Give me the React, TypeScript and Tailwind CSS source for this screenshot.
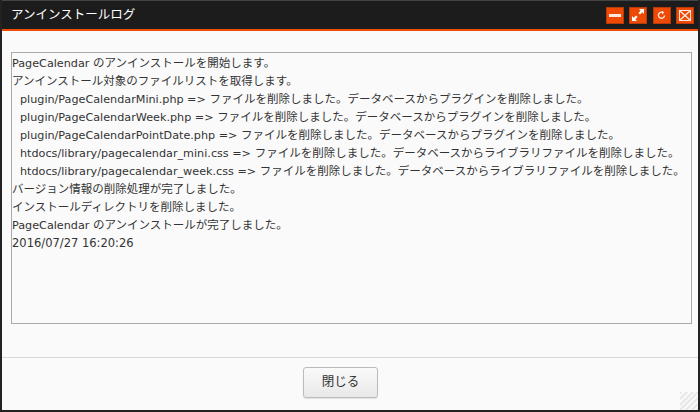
import React from 'react';

const logLines = [
  { latin: 'PageCalendar', text: ' のアンインストールを開始します。' },
  { text: 'アンインストール対象のファイルリストを取得します。' },
  { latin: 'plugin/PageCalendarMini.php =>', text: ' ファイルを削除しました。データベースからプラグインを削除しました。', indent: true },
  { latin: 'plugin/PageCalendarWeek.php =>', text: ' ファイルを削除しました。データベースからプラグインを削除しました。', indent: true },
  { latin: 'plugin/PageCalendarPointDate.php =>', text: ' ファイルを削除しました。データベースからプラグインを削除しました。', indent: true },
  { latin: 'htdocs/library/pagecalendar_mini.css =>', text: ' ファイルを削除しました。データベースからライブラリファイルを削除しました。', indent: true },
  { latin: 'htdocs/library/pagecalendar_week.css =>', text: ' ファイルを削除しました。データベースからライブラリファイルを削除しました。', indent: true },
  { text: 'バージョン情報の削除処理が完了しました。' },
  { text: 'インストールディレクトリを削除しました。' },
  { latin: 'PageCalendar', text: ' のアンインストールが完了しました。' },
  { text: '2016/07/27 16:20:26' },
];

function TitleButton({ children }: { children: React.ReactNode }) {
  return (
    <button className="flex h-[17px] w-[18px] items-center justify-center border border-[#b83a08] bg-[#ee4a05]">
      {children}
    </button>
  );
}

export default function App() {
  return (
    <div className="relative flex h-[412px] w-[700px] flex-col overflow-hidden border-b-2 border-l-2 border-r-[2px] border-[#222] bg-[#fafafa] font-['DejaVu_Sans','Noto_Sans_CJK_JP',sans-serif] text-[11.500px] text-[#333]">
      {/* Title bar */}
      <div className="flex h-[31px] shrink-0 items-center justify-between border-t border-b-2 border-t-[#444] border-b-[#f04a05] bg-[#1c1c1c] pl-[9px] pr-[4px]">
        <h1 className="text-[12.500px] text-white">アンインストールログ</h1>
        <div className="flex gap-[5.500px]">
          <TitleButton>
            <span className="h-[3px] w-3 bg-[#fbe9df]" />
          </TitleButton>
          <TitleButton>
            <svg width="14" height="14" viewBox="0 0 14 14" fill="#fff">
              <path d="M8 1h5v5l-1.7-1.7L9 6.600 7.400 5l2.300-2.300zM6 13H1V8l1.700 1.700L5 7.400 6.600 9l-2.300 2.300z" />
            </svg>
          </TitleButton>
          <TitleButton>
            <svg width="11" height="11" viewBox="0 0 12 12" fill="none" stroke="#fbe9df" strokeWidth="1.500">
              <path d="M7.500 2.800A3.300 3.300 0 1 0 9.300 6" />
              <path d="M6.500 0.800v4l2.600-2z" fill="#fbe9df" stroke="none" />
            </svg>
          </TitleButton>
          <TitleButton>
            <svg width="14" height="13" viewBox="0 0 14 13" fill="none" stroke="#fbe9df">
              <rect x="1.500" y="1.500" width="11" height="10" />
              <path d="M2 2l10 9M12 2 2 11" strokeWidth="1.400" />
            </svg>
          </TitleButton>
        </div>
      </div>

      {/* Log panel */}
      <div className="flex flex-1 flex-col px-[9px] pt-[21px]">
        <div className="h-[272px] w-[681px] border border-[#aaa] bg-[#fafafa] pt-px leading-[18px] whitespace-pre">
          {logLines.map((line, i) => (
            <div key={i} className={line.indent ? 'h-[18px] pl-[8px]' : 'h-[18px]'}>
              {line.latin && <span className="text-[11.200px]">{line.latin}</span>}
              {line.text}
            </div>
          ))}
        </div>
      </div>

      {/* Footer */}
      <div className="flex h-[53px] shrink-0 border-t border-[#d8d8d8] pl-[301px] pt-[9px]">
        <button className="h-[31px] w-[75px] rounded-[3px] border border-[#bbb] bg-gradient-to-b from-[#fafafa] to-[#e8e8e8] text-[12.500px] text-[#333] shadow-[0_1px_1px_rgba(0,0,0,0.1)]">
          閉じる
        </button>
      </div>

      {/* Resize grip */}
      <div className="absolute bottom-0 right-0 h-[18px] w-[18px] bg-[repeating-linear-gradient(135deg,#e8e8e8_0,#e8e8e8_2px,#f8f8f8_2px,#f8f8f8_4px)]" />
    </div>
  );
}
